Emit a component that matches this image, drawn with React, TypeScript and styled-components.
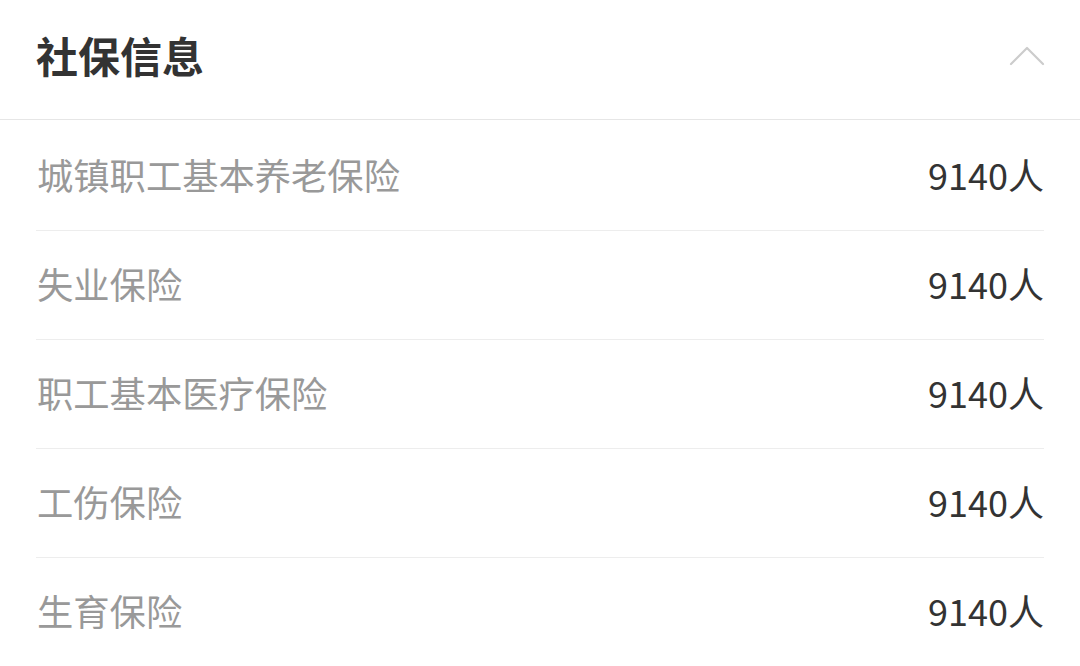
import styled, { createGlobalStyle } from 'styled-components';

const GlobalStyle = createGlobalStyle`
  html, body {
    margin: 0;
    padding: 0;
    background: #ffffff;
  }
  body {
    font-family: "Noto Sans CJK SC", "Noto Sans", sans-serif;
  }
`;

const items = [
  { name: '城镇职工基本养老保险', count: '9140人' },
  { name: '失业保险', count: '9140人' },
  { name: '职工基本医疗保险', count: '9140人' },
  { name: '工伤保险', count: '9140人' },
  { name: '生育保险', count: '9140人' },
];

export default function App() {
  return (
    <>
      <GlobalStyle />
      <Panel>
        <Header>
          <Title>社保信息</Title>
          <Chevron viewBox="0 0 36 20" aria-hidden>
            <polyline points="2,18 18,2 34,18" />
          </Chevron>
        </Header>
        <List>
          {items.map((item) => (
            <Row key={item.name}>
              <Label>{item.name}</Label>
              <Count>{item.count}</Count>
            </Row>
          ))}
        </List>
      </Panel>
    </>
  );
}

const Panel = styled.div`
  width: 1080px;
  height: 666px;
  overflow: hidden;
  background: #fff;
`;

const Header = styled.div`
  height: 119px;
  display: flex;
  align-items: center;
  justify-content: space-between;
  padding: 0 36px;
  border-bottom: 1px solid #e6e6e6;
  box-sizing: content-box;
`;

const Title = styled.h2`
  margin: 0 0 10px 0;
  font-size: 42px;
  font-weight: 700;
  color: #333333;
`;

const Chevron = styled.svg`
  width: 36px;
  height: 20px;
  margin-right: -1px;
  margin-bottom: 8px;
  fill: none;
  stroke: #cccccc;
  stroke-width: 2.2;
  stroke-linecap: round;
  stroke-linejoin: round;
`;

const List = styled.div`
  padding: 2px 36px 0;
`;

const Row = styled.div`
  height: 108px;
  display: flex;
  align-items: center;
  justify-content: space-between;
  border-bottom: 1px solid #ededed;
  box-sizing: content-box;
`;

const Label = styled.span`
  font-size: 36.3px;
  color: #999999;
  padding-left: 1px;
  margin-bottom: 4px;
`;

const Count = styled.span`
  font-size: 36px;
  color: #333333;
  margin-bottom: 4px;
`;
